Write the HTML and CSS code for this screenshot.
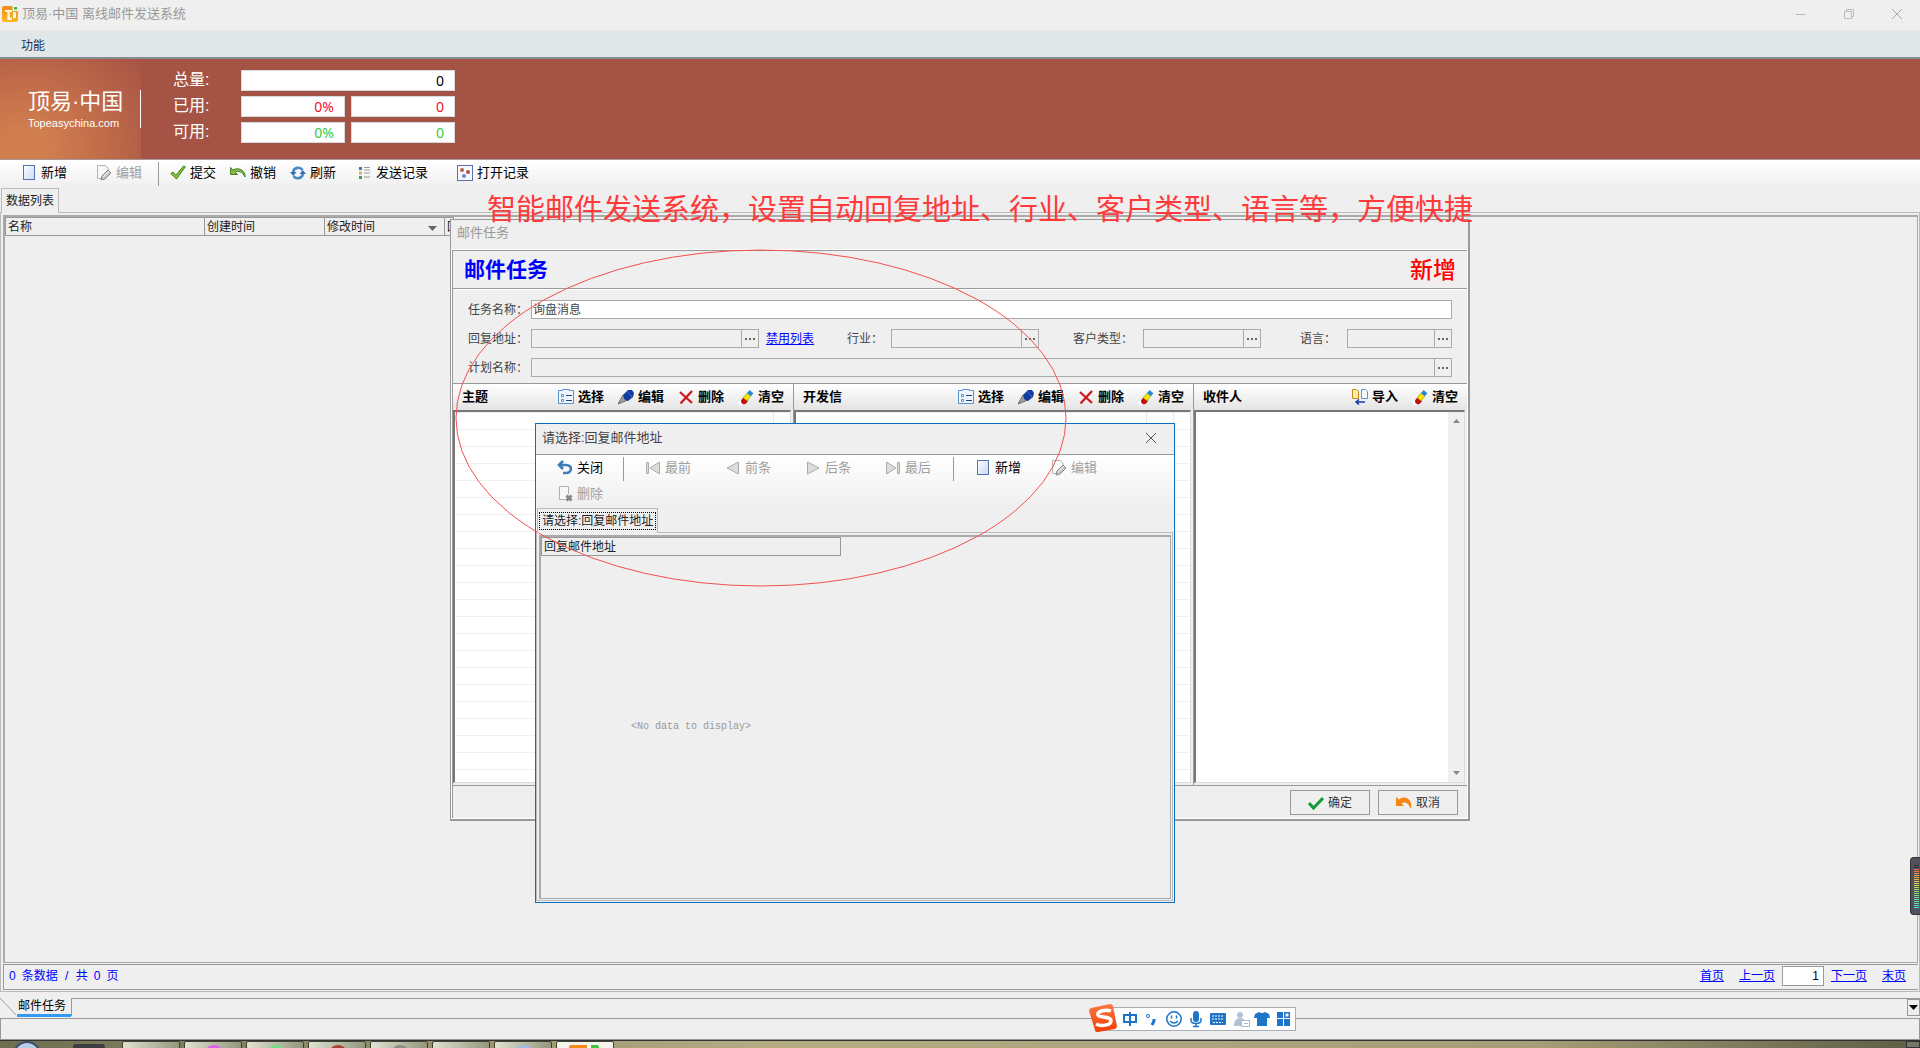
FILE: index.html
```html
<!DOCTYPE html>
<html lang="zh-CN">
<head>
<meta charset="utf-8">
<title>顶易·中国 离线邮件发送系统</title>
<link rel="stylesheet" href="styles.css">
</head>
<body>
<svg class="defs" width="0" height="0" aria-hidden="true">
  <defs>
    <linearGradient id="paper" x1="0" y1="0" x2="1" y2="1"><stop offset="0" stop-color="#fff"/><stop offset="1" stop-color="#c6d9f5"/></linearGradient>
    <linearGradient id="logoFill" x1="0" y1="0" x2="0" y2="1"><stop offset="0" stop-color="#f58a1f"/><stop offset="1" stop-color="#fbb825"/></linearGradient>
    <linearGradient id="imeFill" x1="0" y1="0" x2="0" y2="1"><stop offset="0" stop-color="#fb7a45"/><stop offset="1" stop-color="#f23c05"/></linearGradient>
  </defs>
  <symbol id="i-new" viewBox="0 0 16 16"><rect x="2.5" y=".5" width="11" height="14" fill="url(#paper)" stroke="#5572b5"/></symbol>
  <symbol id="i-edit" viewBox="0 0 16 16"><path d="M7 13.500H1.500V.5H9.500L12 3v3" fill="#f8f8f8" stroke="#b5b5b5"/><path d="M5 15l1-4 6-6 3 3-6 6z" fill="#c8c8c8" stroke="#888"/><path d="M7 12l6-6" stroke="#f2f2f2"/></symbol>
  <symbol id="i-del" viewBox="0 0 16 16"><path d="M8 13.500H2.500V.5H11.500V8" fill="#f8f8f8" stroke="#b0b0b0"/><path d="M9.500 9.500l5 5M14.500 9.500l-5 5" stroke="#888" stroke-width="3"/></symbol>
  <symbol id="i-check" viewBox="0 0 16 16"><path d="M.8 8.500l2.500-1.200 2.500 3L13.500 1l1.800.8L6.500 14z" fill="#86c440" stroke="#3f8018"/></symbol>
  <symbol id="i-undo" viewBox="0 0 16 16"><path d="M.6 2.500v7h7L5.200 7.200C8 5.300 12 6 15 12c.8-6-6-10.500-12-7z" fill="#84bd4c" stroke="#417a22"/></symbol>
  <symbol id="i-refresh" viewBox="0 0 16 16"><path d="M3.200 8V6.800A5 4.500 0 0 1 12.500 5M12.800 8v1.200A5 4.500 0 0 1 3.500 11" fill="none" stroke="#4c87c8" stroke-width="2.600"/><path d="M0 7h6.500L3.200 11zM9.500 9H16l-3.200-4z" fill="#356fb5"/></symbol>
  <symbol id="i-list" viewBox="0 0 16 16"><path d="M3 2h3v3H3z" fill="#3c78b8"/><path d="M3 6.500h3v3H3z" fill="#f0a85c"/><path d="M3 11h3v3H3z" fill="#4b9b54"/><path d="M8 2.500h6M8 5h6M8 8h6M8 12h6" stroke="#999"/></symbol>
  <symbol id="i-rec" viewBox="0 0 16 16"><rect x=".5" y=".5" width="15" height="15" fill="#f5f8fd" stroke="#5a70b0"/><circle cx="5" cy="5" r="2" fill="#b56249"/><circle cx="11" cy="7" r="2" fill="#b54e3c"/><circle cx="7" cy="11" r="2" fill="#6689cf"/></symbol>
  <symbol id="i-select" viewBox="0 0 16 16"><path d="M.5 1.500h4v-1h7v1h4v13H.5z" fill="#eef5fc" stroke="#5b93cf"/><path d="M3.500 5.500h2v2h-2zM3.500 10.500h2v2h-2z" fill="#fff" stroke="#5b93cf"/><path d="M8 6.500h6M8 11.500h6" stroke="#1b3f9a"/></symbol>
  <symbol id="i-pen" viewBox="0 0 16 16"><path d="M0 15l5-9 5 5z" fill="#9da1a5" stroke="#555" stroke-width=".8"/><path d="M5 6l5-5h4l2 3-1 4-5 4-4-2z" fill="#123b9c"/><path d="M9 2l5 6" stroke="#3d6ad0"/></symbol>
  <symbol id="i-x" viewBox="0 0 16 16"><path d="M2 3l12 11M14 2L2.500 14.500" stroke="#cf1515" stroke-width="2.200" fill="none"/></symbol>
  <symbol id="i-eraser" viewBox="0 0 16 16"><g transform="rotate(-50 9 8)"><rect x="1" y="5.500" width="7" height="6" rx="3" fill="#c80d0d"/><rect x="6" y="5.500" width="6" height="5" fill="#f6e600" stroke="#8a8200" stroke-width=".5"/><path d="M12 5.500l4 0v5h-4z" fill="#2287d8"/></g><path d="M0 12h3v3h2v1H1z" fill="#fff"/></symbol>
  <symbol id="i-import" viewBox="0 0 16 16"><path d="M.5.5h4l2 2v7h-6z" fill="#fdf0b2" stroke="#c58a16"/><path d="M9.500.5h4l2 2v7h-6z" fill="#f4f9ff" stroke="#5b93cf"/><path d="M4 13h9M7 10.500L4 13l3 2.500" fill="none" stroke="#0b3fae" stroke-width="1.500"/></symbol>
  <symbol id="i-back" viewBox="0 0 16 16"><path d="M6 1L2 5l4 4M3 5h6c7 0 6 8 0 8H6" fill="none" stroke="#3f7cb8" stroke-width="2.600"/></symbol>
  <symbol id="i-first" viewBox="0 0 16 16"><path d="M1.500 2.500h2v11h-2zM14.500 2v12L5 8z" fill="#ddd" stroke="#aaa"/></symbol>
  <symbol id="i-prev" viewBox="0 0 16 16"><path d="M13.500 2v12L2 8z" fill="#ddd" stroke="#aaa"/></symbol>
  <symbol id="i-next" viewBox="0 0 16 16"><path d="M2.500 2v12L14 8z" fill="#ddd" stroke="#aaa"/></symbol>
  <symbol id="i-last" viewBox="0 0 16 16"><path d="M12.500 2.500h2v11h-2zM1.500 2v12L11 8z" fill="#ddd" stroke="#aaa"/></symbol>
  <symbol id="i-ok" viewBox="0 0 16 16"><path d="M1 8l4.500 5L15 3" fill="none" stroke="#169b37" stroke-width="3"/></symbol>
  <symbol id="i-cancel" viewBox="0 0 16 16"><path d="M0 2v9h8L5.500 8.500C9 6 13 8 14.500 14 18 5 9-1 3 4.500z" fill="#f5860f"/></symbol>
  <symbol id="i-dots" viewBox="0 0 16 16"><path d="M3 7h2v2H3zM7 7h2v2H7zM11 7h2v2h-2z" fill="#666"/></symbol>
</svg>

<header class="titlebar">
  <svg width="16" height="16" viewBox="0 0 16 16"><rect width="16" height="16" rx="2" fill="url(#logoFill)"/><path d="M10.500 0H16v5h-5.500z" fill="#eef6e6"/><path d="M12 1h3v2.500h-3z" fill="#39b43c"/><path d="M3 4h7v2H7.800v5.500H10V14H5.500V6H3zM11 6h3v6h-3z" fill="#fff8e0"/></svg>
  <h1>顶易·中国 离线邮件发送系统</h1>
  <div class="winbtns">
    <button aria-label="最小化"><svg width="12" height="12"><path d="M1 6.500h10" stroke="#bbb"/></svg></button>
    <button aria-label="还原"><svg width="12" height="12"><path d="M1.500 3.500h7v7h-7zM3.500 3V1.500h7v7H9" fill="none" stroke="#bbb"/></svg></button>
    <button aria-label="关闭窗口"><svg width="12" height="12"><path d="M1 1l10 10M11 1L1 11" stroke="#aaa"/></svg></button>
  </div>
</header>
<nav class="menu"><a href="#">功能</a></nav>

<section class="banner">
  <div class="brand"><div class="brand-text"><strong>顶易·中国</strong><span>Topeasychina.com</span></div></div>
  <div class="stats">
    <label for="total">总量:</label><input id="total" class="wide" value="0" readonly>
    <label for="usedp">已用:</label><input id="usedp" class="red" value="0%" readonly><input class="red" aria-label="已用" value="0" readonly>
    <label for="freep">可用:</label><input id="freep" class="green" value="0%" readonly><input class="green" aria-label="可用" value="0" readonly>
  </div>
</section>

<div class="toolbar main-tools">
  <button><svg><use href="#i-new"/></svg>新增</button>
  <button class="w2" disabled><svg><use href="#i-edit"/></svg>编辑</button>
  <i class="sep"></i>
  <button><svg><use href="#i-check"/></svg>提交</button>
  <button><svg><use href="#i-undo"/></svg>撤销</button>
  <button><svg><use href="#i-refresh"/></svg>刷新</button>
  <button class="w1"><svg><use href="#i-list"/></svg>发送记录</button>
  <button class="w2"><svg><use href="#i-rec"/></svg>打开记录</button>
</div>

<main class="work">
  <div class="tabs"><button class="tab">数据列表</button></div>
  <div class="pane">
    <div class="grid">
      <table class="cols">
        <tr><th class="c1">名称</th><th class="c2">创建时间</th><th class="c2">修改时间<svg class="sort" width="9" height="5"><path d="M0 0h9L4.500 5z" fill="#666"/></svg></th><th class="c3">回</th></tr>
      </table>
    </div>
    <div class="pager">
      <p><span>0</span><span>条数据</span><span>/</span><span>共</span><span>0</span><span>页</span></p>
      <div class="pages"><a href="#">首页</a><a href="#">上一页</a><input aria-label="页码" value="1"><a href="#">下一页</a><a href="#">末页</a></div>
    </div>
  </div>
</main>

<div class="windows">
  <svg class="slant" width="17" height="19"><path d="M0 0l16 17" stroke="#a0a0a0"/></svg>
  <button class="wtab">邮件任务</button>
  <div class="rest"><button class="drop" aria-label="窗口列表"><svg width="9" height="5"><path d="M0 0h9L4.500 5z"/></svg></button></div>
</div>
<div class="status"></div>
<footer class="taskbar">
  <span class="orb"></span><span class="device"></span>
  <div class="tasks"><b></b><b class="t-pink"></b><b class="t-green"></b><b class="t-red"></b><b class="t-grey"></b><b></b><b class="t-blue"></b><b class="t-app"></b></div>
  <span class="peek"></span>
</footer>

<section class="dialog" aria-label="邮件任务">
  <h2 class="dtitle">邮件任务</h2>
  <div class="dbody">
    <div class="dhead"><h3>邮件任务</h3><strong>新增</strong></div>
    <form class="form">
      <div class="row"><label for="name">任务名称：</label><input id="name" class="text" value="询盘消息"></div>
      <div class="row">
        <label for="reply">回复地址：</label><div class="combo reply"><input id="reply"><button type="button" aria-label="选择回复地址"><svg><use href="#i-dots"/></svg></button></div>
        <a href="#">禁用列表</a>
        <label class="l-ind" for="ind">行业：</label><div class="combo ind"><input id="ind"><button type="button" aria-label="选择行业"><svg><use href="#i-dots"/></svg></button></div>
        <label class="l-cust" for="cust">客户类型：</label><div class="combo cust"><input id="cust"><button type="button" aria-label="选择客户类型"><svg><use href="#i-dots"/></svg></button></div>
        <label class="l-lang" for="lang">语言：</label><div class="combo"><input id="lang"><button type="button" aria-label="选择语言"><svg><use href="#i-dots"/></svg></button></div>
      </div>
      <div class="row"><label for="plan">计划名称：</label><div class="combo"><input id="plan"><button type="button" aria-label="选择计划"><svg><use href="#i-dots"/></svg></button></div></div>
    </form>
    <div class="lists">
      <div class="list subject">
        <div class="lhead"><h4>主题</h4><button><svg><use href="#i-select"/></svg>选择</button><button><svg><use href="#i-pen"/></svg>编辑</button><button><svg><use href="#i-x"/></svg>删除</button><button><svg><use href="#i-eraser"/></svg>清空</button></div>
        <div class="lbox lined"><i class="r17"></i></div>
      </div>
      <div class="list letter">
        <div class="lhead"><h4>开发信</h4><button><svg><use href="#i-select"/></svg>选择</button><button><svg><use href="#i-pen"/></svg>编辑</button><button><svg><use href="#i-x"/></svg>删除</button><button><svg><use href="#i-eraser"/></svg>清空</button></div>
        <div class="lbox lined"><i class="r27"></i><i class="r17"></i></div>
      </div>
      <div class="list people">
        <div class="lhead"><h4>收件人</h4><button><svg><use href="#i-import"/></svg>导入</button><button><svg><use href="#i-eraser"/></svg>清空</button></div>
        <div class="lbox"><div class="scroll"><svg width="7" height="4"><path d="M0 4h7L3.500 0z" fill="#888"/></svg><svg width="7" height="4"><path d="M0 0h7L3.500 4z" fill="#888"/></svg></div></div>
      </div>
    </div>
    <div class="dfoot"><button><svg><use href="#i-ok"/></svg>确定</button><button><svg><use href="#i-cancel"/></svg>取消</button></div>
  </div>
</section>

<section class="picker" aria-label="请选择:回复邮件地址">
  <div class="ptitle"><h2>请选择:回复邮件地址</h2><button aria-label="关闭对话框"><svg width="12" height="12"><path d="M1 1l10 10M11 1L1 11" stroke="#555"/></svg></button></div>
  <div class="toolbar ptools">
    <button><svg><use href="#i-back"/></svg>关闭</button>
    <i class="sep"></i>
    <button disabled><svg><use href="#i-first"/></svg>最前</button>
    <button disabled><svg><use href="#i-prev"/></svg>前条</button>
    <button disabled><svg><use href="#i-next"/></svg>后条</button>
    <button disabled><svg><use href="#i-last"/></svg>最后</button>
    <i class="sep"></i>
    <button class="narrow"><svg><use href="#i-new"/></svg>新增</button>
    <button disabled><svg><use href="#i-edit"/></svg>编辑</button>
    <button disabled><svg><use href="#i-del"/></svg>删除</button>
  </div>
  <div class="tabs"><button class="tab focus"><span>请选择:回复邮件地址</span></button></div>
  <div class="pane">
    <div class="grid"><div class="result"><table><tr><th>回复邮件地址</th></tr></table><p>&lt;No data to display&gt;</p></div></div>
  </div>
</section>

<svg class="ring" width="612" height="338" viewBox="0 0 612 338"><ellipse cx="306" cy="169" rx="305" ry="168" fill="none" stroke="#f25050"/></svg>
<p class="note">智能邮件发送系统，设置自动回复地址、行业、客户类型、语言等，方便快捷</p>

<div class="meter"><i></i></div>

<svg class="ime" width="208" height="28" viewBox="0 0 208 28" role="img" aria-label="输入法">
  <rect x="14.500" y="3.500" width="192" height="23" fill="#fff" stroke="#a9adb5"/>
  <path d="M2 4L21 0q2 0 3 2l4 20q0 2-2 3L9 28q-3 0-3-2L0 7q0-2 2-3z" fill="url(#imeFill)"/>
  <path d="M22 7c-5-2-14 0-13 4 1 3 13 1 13 6 0 4-10 6-15 3" fill="none" stroke="#fff" stroke-width="3.500"/>
  <g fill="none" stroke="#1e74c6" stroke-width="2">
    <path d="M35 11h12v7H35zM41 8v14"/>
    <circle cx="59" cy="12" r="1.500" stroke-width="1"/><path d="M65 15v2l-2 4" stroke-width="3"/>
    <circle cx="85" cy="15" r="7.200" stroke-width="1.500"/><path d="M82.500 11.500v3M87.500 11.500v3M81 17q4 4 8 0" stroke-width="1.500"/>
    <path d="M102 14v2q0 3.500 5 3.500t5-3.500v-2M107 19v4M104 22.500h6" stroke-width="1.500"/>
  </g>
  <rect x="104" y="7" width="6" height="11" rx="3" fill="#1e74c6"/>
  <rect x="121" y="9" width="16" height="12" rx="1" fill="#1e74c6"/><path d="M123 12h12M123 15h12M124 18.500h10" stroke="#fff" stroke-dasharray="2 1"/>
  <g fill="#b4c2d8"><circle cx="151" cy="11" r="3"/><path d="M145 22q0-8 6-8 4 0 5 3l-3 5z"/></g><path d="M152.500 16.500h8v6h-8zM155 19.500h4" fill="#fff" stroke="#a8b8d2"/>
  <path d="M166 10l4-2q3 2 6 0l4 2 1 4h-3v8h-10v-8h-3z" fill="#1e74c6"/>
  <path d="M188 8h6v6h-6zM188 15h6v7h-6zM195 15h6v7h-6z" fill="#1e74c6"/><path d="M195.800 8.800h4.500v4.500h-4.500z" fill="none" stroke="#1e74c6" stroke-width="1.500"/>
</svg>
</body>
</html>
```
FILE: styles.css
```css
* { box-sizing: border-box; }

html { height: 100%; }

body {
  position: relative;
  display: flex;
  flex-direction: column;
  min-height: 100%;
  margin: 0;
  overflow: hidden;
  background: #efefef;
  color: #222;
  font: 12px/16px "Liberation Sans", "Noto Sans CJK SC", sans-serif;
}

h1, h2, h3, h4, p { margin: 0; font-size: 12px; font-weight: 400; }
button, input { margin: 0; padding: 0; border: 0; border-radius: 0; background: none; color: inherit; font: inherit; }
input { min-width: 0; outline: 0; }
a { color: #00f; }
svg { display: block; flex: none; }
.defs { position: absolute; }

/* Title bar and menu */
.titlebar { display: flex; align-items: center; gap: 4px; height: 30px; padding: 0 2px 2px; }
.titlebar h1 { color: #999; font-size: 13px; }
.winbtns { display: flex; margin-left: auto; padding-right: 15px; gap: 36px; }
.winbtns button { width: 12px; height: 12px; }
.menu { height: 29px; padding: 8px 21px 0; border-bottom: 2px solid #848d93; background: #e1e6e9; }
.menu a { color: #16324f; text-decoration: none; }

/* Quota banner */
.banner { display: flex; height: 101px; border-bottom: 1px solid #a09a98; background: #a55344; }
.brand { display: flex; align-items: center; width: 141px; background: radial-gradient(ellipse 150px 130px at 25px 90px, #d17e4f 15%, #c26d4a 50%, #a85545 100%); color: #fff; }
.brand-text { width: 141px; height: 38px; padding-left: 28px; border-right: 1px solid #fff; }
.brand strong, .brand span { display: block; white-space: nowrap; }
.brand strong { font-size: 22px; font-weight: 400; line-height: 24px; }
.brand span { font-size: 11px; line-height: 18px; }
.stats { display: grid; grid-template-columns: 68px 104px 110px; grid-auto-rows: 21px; row-gap: 5px; margin: 11px 0 0 32px; }
.stats label { color: #fff; font-size: 16px; line-height: 19px; }
.stats input { padding-right: 10px; border: 1px solid #d3dadf; background: #fff; color: #000; font: 14px "Noto Sans", sans-serif; text-align: right; }
.stats input.wide { grid-column: 2 / 4; }
.stats input:not(.wide):nth-of-type(odd) { margin-left: 6px; }
.stats .red { color: #f01024; }
.stats .green { color: #3cc63c; }

/* Toolbars */
.toolbar { display: flex; background: linear-gradient(#fff, #efefef); color: #000; font-size: 13px; }
.toolbar button, .lhead button, .dfoot button { display: flex; align-items: center; gap: 4px; white-space: nowrap; }
.toolbar svg, .lhead svg, .dfoot svg, .combo svg { width: 16px; height: 16px; }
.toolbar button:disabled { color: #a0a0a0; }
.sep { width: 1px; height: 24px; background: #999; }
.main-tools { height: 28px; padding: 0 21px; gap: 14px; }
.main-tools button { height: 26px; }
.main-tools .w1 { margin-left: 6px; }
.main-tools .w2 { margin-left: 15px; }
.main-tools .sep { margin: 2px -3px 0 2px; }

/* Tabbed panes */
.work { display: flex; flex: 1; flex-direction: column; }
.tabs { display: flex; height: 24px; padding-left: 1px; }
.tab { height: 25px; padding: 0 4px; border: 1px solid #bbb; border-bottom: 0; background: #efefef; z-index: 1; }
.pane { display: flex; flex: 1; flex-direction: column; padding: 2px 1px 1px 2px; border: 1px solid #bbb; }
.grid { flex: 1; border: 1px solid #aaa; border-width: 2px 1px 1px 2px; }
table { border-collapse: collapse; table-layout: fixed; }
th { height: 18px; padding: 0 2px; border: 1px solid #999; font-weight: 400; text-align: left; line-height: 16px; white-space: nowrap; }
.cols { width: 449px; }
.c1 { width: 199px; }
.c2 { width: 120px; }
.c3 { overflow: hidden; }
.c2 .sort { float: right; margin: 7px 5px 0 0; }
.pager { display: flex; justify-content: space-between; height: 26px; margin-top: 1px; padding: 0 12px 2px 5px; border: 1px solid #999; border-right: 0; color: #00f; }
.pager p { display: flex; align-items: center; gap: 6px; }
.pager span { min-width: 6px; text-align: center; }
.pages { display: flex; align-items: center; }
.pages a { margin-left: 15px; }
.pages input { width: 42px; height: 20px; margin: 0 -8px 0 7px; padding-right: 4px; border: 1px solid #999; background: #fff; color: #000; text-align: right; }

/* Window list, status line, task bar */
.windows { display: flex; height: 20px; margin-top: 6px; color: #000; }
.wtab { width: 54px; height: 19px; padding: 1px 0 0 1px; border-bottom: 3px solid #3399f5; text-align: left; white-space: nowrap; line-height: 15px; }
.rest { display: flex; flex: 1; justify-content: flex-end; height: 18px; border: 1px solid #999; border-width: 1px 0 0 1px; }
.drop { display: flex; align-items: center; justify-content: center; width: 13px; height: 17px; border: 1px solid #999; }
.status { height: 22px; border: 1px solid #999; }
.taskbar { display: flex; height: 8px; overflow: hidden; border-top: 1px solid #333; background: linear-gradient(90deg, #6e6f50, #b5ac84 40%, #a69e76 80%, #5d5d45); }
.orb { width: 28px; height: 28px; margin-left: 13px; border: 2px solid #3b4c72; border-radius: 14px; background: #b9cde4; }
.device { width: 32px; height: 20px; margin: 3px 0 0 32px; border-radius: 3px; background: #3b3d40; }
.tasks { display: flex; gap: 4px; margin-left: 17px; }
.tasks b { width: 58px; height: 30px; border: 1px solid #40422f; border-radius: 2px; background: linear-gradient(100deg, #dfe2d2, #8d9277); }
.tasks b::before { content: ""; display: block; width: 20px; height: 20px; margin: 3px 0 0 19px; border-radius: 10px; }
.tasks .t-pink::before { background: #df5cf0; }
.tasks .t-green::before { background: #72e087; }
.tasks .t-red::before { background: #a8402f; }
.tasks .t-grey::before { background: #8c8e85; }
.tasks .t-blue::before { background: #a0bde8; }
.tasks .t-app { background: #f3f4ec; }
.tasks .t-app::before { width: 30px; margin-left: 12px; border-radius: 2px; background: linear-gradient(90deg, #f58a14 60%, #fff 60% 72%, #3cc63c 72%); }
.peek { width: 14px; margin-left: auto; border: 1px solid #333; background: #77786a; }

/* Mail task window */
.dialog { position: absolute; top: 219px; left: 450px; display: flex; flex-direction: column; width: 1020px; height: 602px; border: 1px solid #999; border-width: 1px 2px 2px 1px; background: #efefef; }
.dtitle { height: 30px; padding: 5px 6px; color: #999; font-size: 13px; }
.dbody { display: flex; flex: 1; flex-direction: column; margin: 0 1px 1px; border: 1px solid #999; border-width: 1px 0 0 1px; box-shadow: 0 0 0 1px #fff; }
.dhead { display: flex; align-items: center; justify-content: space-between; height: 37px; padding: 0 11px; }
.dhead h3 { color: #00f; font-size: 21px; font-weight: 700; line-height: 24px; }
.dhead strong { color: #f00; font-size: 23px; font-weight: 500; line-height: 24px; }
.form { display: flex; flex-direction: column; gap: 10px; height: 95px; padding: 11px 15px 0; border-top: 1px solid #999; box-shadow: inset 0 1px #fff; color: #444; }
.row { display: flex; height: 19px; }
.row label { width: 63px; line-height: 20px; white-space: nowrap; }
.row .l-ind { width: 44px; }
.row .l-cust { width: 104px; padding-left: 34px; }
.row .l-lang { width: 86px; padding-left: 39px; }
.row a { width: 88px; padding-left: 7px; line-height: 20px; }
.text { flex: 1; padding: 0 1px; border: 1px solid #aaa; background: #fff; line-height: 16px; }
.combo { display: flex; flex: 1; border: 1px solid #aaa; }
.combo input { flex: 1; width: 0; }
.combo button { width: 17px; border-left: 1px solid #aaa; }
.reply, .ind, .cust { flex: none; width: 228px; }
.ind { width: 148px; }
.cust { width: 118px; }

.lists { display: flex; flex: 1; border-top: 1px solid #999; }
.list { display: flex; flex: 1; flex-direction: column; border-left: 1px solid #999; }
.subject { flex: none; width: 340px; border-left: 0; }
.letter { flex: none; width: 400px; }
.lhead { display: flex; align-items: center; height: 26px; padding: 0 9px; gap: 14px; background: linear-gradient(#fff, #e4e4e4); color: #000; font-size: 13px; }
.lhead h4 { margin-right: auto; font-weight: 700; font-size: 13px; }
.lhead button { font-weight: 700; }
.lbox { display: flex; flex: 1; justify-content: flex-end; margin: 0 2px 2px 0; border: 1px solid #ddd; border-top: 2px solid #777; border-left: 2px solid #777; background: #fff; }
.lined { background: linear-gradient(#efefef 1px, transparent 1px) 0 0 / 100% 17px #fff; }
.lbox i { border-left: 1px solid #e8e8e8; }
.r17 { width: 17px; }
.r27 { width: 27px; }
.scroll { display: flex; flex-direction: column; align-items: center; justify-content: space-between; width: 16px; padding: 7px 0; background: #efefef; }
.dfoot { display: flex; justify-content: flex-end; gap: 8px; height: 33px; padding: 4px 9px; border-top: 1px solid #999; }
.dfoot button { justify-content: center; width: 80px; height: 25px; border: 1px solid #999; color: #333; }

/* Reply address picker */
.picker { position: absolute; top: 423px; left: 535px; display: flex; flex-direction: column; width: 640px; height: 480px; border: 1px solid #0a6fc0; background: #efefef; }
.ptitle { display: flex; align-items: center; justify-content: space-between; height: 31px; padding: 0 17px 2px 6px; border-bottom: 1px solid #999; }
.ptitle h2 { color: #444; font-size: 13px; }
.ptools { flex-wrap: wrap; align-content: flex-start; height: 53px; padding-left: 21px; }
.ptools button { width: 80px; height: 25px; padding-top: 1px; }
.ptools button:first-child { width: 66px; }
.ptools .narrow { width: 76px; }
.ptools .sep { margin: 2px 21px 0 0; }
.ptools .sep:nth-of-type(2) { margin-left: -12px; }
.tab.focus { padding: 0 1px; }
.focus span { display: block; border: 1px dotted #000; padding: 0 2px; }
.picker .pane { margin: 0 1px 1px 0; }
.picker .grid { display: flex; }
.result { display: flex; flex-direction: column; width: 300px; }
.result table { width: 300px; }
.result p { margin: auto; color: #999; font: 10px/12px "Liberation Mono", monospace; }

/* Red marks over the windows */
.ring { position: absolute; top: 249px; left: 455px; pointer-events: none; }
.note { position: absolute; top: 187px; left: 487px; color: #ff3a3a; font: 29px/40px "Noto Sans CJK SC", sans-serif; white-space: nowrap; }

/* Floating desktop widgets */
.meter { position: absolute; top: 857px; right: 0; width: 10px; height: 58px; padding: 7px 1px 6px 3px; border: 1px solid #333; border-right: 0; border-radius: 4px 0 0 4px; background: #50535f; }
.meter i { display: block; height: 100%; background: repeating-linear-gradient(transparent 0 1px, #50535f 1px 2px), linear-gradient(#333 8%, #f25555 8%, #f0a040 24%, #e5d84a 45%, #86d86a 65%, #4fe0d0); }
.ime { position: absolute; top: 1004px; left: 1089px; }
```
